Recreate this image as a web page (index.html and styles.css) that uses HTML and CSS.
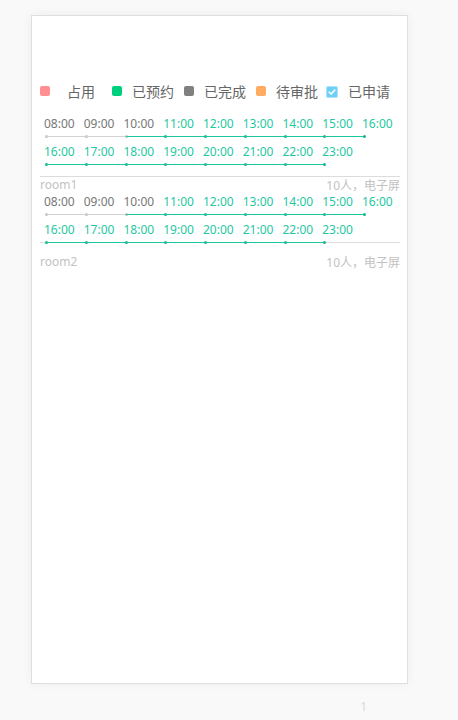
FILE: index.html
```html
<!DOCTYPE html>
<html lang="zh-CN">
<head>
<meta charset="utf-8">
<title>会议室预约</title>
<link rel="stylesheet" href="styles.css">
</head>
<body>
<div class="page">
  <div class="card">
    <div class="legend">
      <span class="swatch sw-busy"></span><span class="legend-label">占用</span>
      <span class="swatch sw-booked"></span><span class="legend-label">已预约</span>
      <span class="swatch sw-done"></span><span class="legend-label">已完成</span>
      <span class="swatch sw-pending"></span><span class="legend-label">待审批</span>
      <span class="check"><svg viewBox="0 0 12 12" width="12" height="12"><path d="M2.6 6.2 L5 8.5 L9.4 3.6" fill="none" stroke="#fff" stroke-width="1.8" stroke-linecap="round" stroke-linejoin="round"/></svg></span><span class="legend-label">已申请</span>
    </div>

    <div class="room room-first">
      <div class="slots">
        <div class="slot-row">
          <div class="slot off"><span class="time">08:00</span><span class="track"></span></div>
          <div class="slot off"><span class="time">09:00</span><span class="track"></span></div>
          <div class="slot off"><span class="time">10:00</span><span class="track"></span></div>
          <div class="slot on"><span class="time">11:00</span><span class="track"></span></div>
          <div class="slot on"><span class="time">12:00</span><span class="track"></span></div>
          <div class="slot on"><span class="time">13:00</span><span class="track"></span></div>
          <div class="slot on"><span class="time">14:00</span><span class="track"></span></div>
          <div class="slot on"><span class="time">15:00</span><span class="track"></span></div>
          <div class="slot on"><span class="time">16:00</span><span class="track"></span></div>
        </div>
        <div class="slot-row">
          <div class="slot on"><span class="time">16:00</span><span class="track"></span></div>
          <div class="slot on"><span class="time">17:00</span><span class="track"></span></div>
          <div class="slot on"><span class="time">18:00</span><span class="track"></span></div>
          <div class="slot on"><span class="time">19:00</span><span class="track"></span></div>
          <div class="slot on"><span class="time">20:00</span><span class="track"></span></div>
          <div class="slot on"><span class="time">21:00</span><span class="track"></span></div>
          <div class="slot on"><span class="time">22:00</span><span class="track"></span></div>
          <div class="slot on"><span class="time">23:00</span><span class="track"></span></div>
        </div>
      </div>
      <div class="meta"><span class="room-name">room1</span><span class="room-info">10人，电子屏</span></div>
    </div>

    <div class="room room-next">
      <div class="slots">
        <div class="slot-row">
          <div class="slot off"><span class="time">08:00</span><span class="track"></span></div>
          <div class="slot off"><span class="time">09:00</span><span class="track"></span></div>
          <div class="slot off"><span class="time">10:00</span><span class="track"></span></div>
          <div class="slot on"><span class="time">11:00</span><span class="track"></span></div>
          <div class="slot on"><span class="time">12:00</span><span class="track"></span></div>
          <div class="slot on"><span class="time">13:00</span><span class="track"></span></div>
          <div class="slot on"><span class="time">14:00</span><span class="track"></span></div>
          <div class="slot on"><span class="time">15:00</span><span class="track"></span></div>
          <div class="slot on"><span class="time">16:00</span><span class="track"></span></div>
        </div>
        <div class="slot-row">
          <div class="slot on"><span class="time">16:00</span><span class="track"></span></div>
          <div class="slot on"><span class="time">17:00</span><span class="track"></span></div>
          <div class="slot on"><span class="time">18:00</span><span class="track"></span></div>
          <div class="slot on"><span class="time">19:00</span><span class="track"></span></div>
          <div class="slot on"><span class="time">20:00</span><span class="track"></span></div>
          <div class="slot on"><span class="time">21:00</span><span class="track"></span></div>
          <div class="slot on"><span class="time">22:00</span><span class="track"></span></div>
          <div class="slot on"><span class="time">23:00</span><span class="track"></span></div>
        </div>
      </div>
      <div class="meta"><span class="room-name">room2</span><span class="room-info">10人，电子屏</span></div>
    </div>
  </div>
  <div class="pager">1</div>
</div>
</body>
</html>
```

FILE: styles.css
```css
html, body {
  margin: 0;
  padding: 0;
  background: #f9f9f9;
}

body {
  font-family: "Noto Sans", "Noto Sans CJK SC", "DejaVu Sans", sans-serif;
}

.page {
  padding: 15px 0 0 31px;
}

.card {
  box-sizing: border-box;
  width: 377px;
  height: 669px;
  background: #fff;
  border: 1px solid #dfdfdf;
  box-shadow: 0 0 10px rgba(0, 0, 0, 0.05);
  padding: 65px 7px 0 8px;
}

/* legend */
.legend {
  display: flex;
  align-items: center;
  height: 20px;
  font-family: "Noto Sans CJK SC", sans-serif;
  font-size: 14px;
  line-height: 20px;
  color: #666;
}

.swatch {
  width: 10px;
  height: 10px;
  border-radius: 2px;
  margin-right: 10px;
}

.sw-busy { background: #ff8f92; }
.sw-booked { background: #00cf7f; }
.sw-done { background: #808080; }
.sw-pending { background: #ffac62; }

.legend-label {
  min-width: 42px;
  text-align: center;
  margin-right: 10px;
}

.check {
  box-sizing: border-box;
  width: 12px;
  height: 12px;
  margin: 2px 10px 0 -2px;
  border-radius: 2px;
  background: #6fd0f6;
  border: 1px solid #a9e3f9;
  display: flex;
  align-items: center;
  justify-content: center;
}

.check svg {
  display: block;
}

/* rooms */
.room-first {
  margin-top: 15px;
}

.room-next {
  margin-top: 1px;
}

.slot-row {
  display: flex;
}

.slot {
  width: 39.75px;
  flex: none;
  display: flex;
  flex-direction: column;
}

.time {
  display: block;
  padding-left: 4px;
  font-size: 12px;
  line-height: 16px;
  white-space: nowrap;
}

.track {
  display: block;
  position: relative;
  height: 12px;
}

.track::before {
  content: "";
  position: absolute;
  left: -33.75px;
  top: 4px;
  width: 39.75px;
  height: 1px;
}

.slot:first-child .track::before {
  display: none;
}

.track::after {
  content: "";
  position: absolute;
  left: 5px;
  top: 3px;
  width: 3px;
  height: 3px;
  border-radius: 50%;
}

.off .time { color: #777; }
.off .track::before { background: #d2d2d2; }
.off .track::after { background: #c4c4c4; }

.on .time { color: #1fc8a2; }
.on .track::before { background: #1cc9a0; }
.on .track::after { background: #17b58f; }

.meta {
  display: flex;
  justify-content: space-between;
  align-items: baseline;
  border-top: 1px solid #dcdcdc;
  font-size: 12px;
  line-height: 16px;
  color: #c2c2c2;
}

.room-first .meta {
  margin-top: 4px;
}

.room-next .meta {
  margin-top: -8px;
  padding-top: 11px;
}

.room-info {
  position: relative;
  top: 1px;
}

.pager {
  width: 377px;
  box-sizing: border-box;
  margin-top: 15px;
  padding-right: 41px;
  text-align: right;
  font-size: 12px;
  line-height: 16px;
  color: #dadada;
}
```
